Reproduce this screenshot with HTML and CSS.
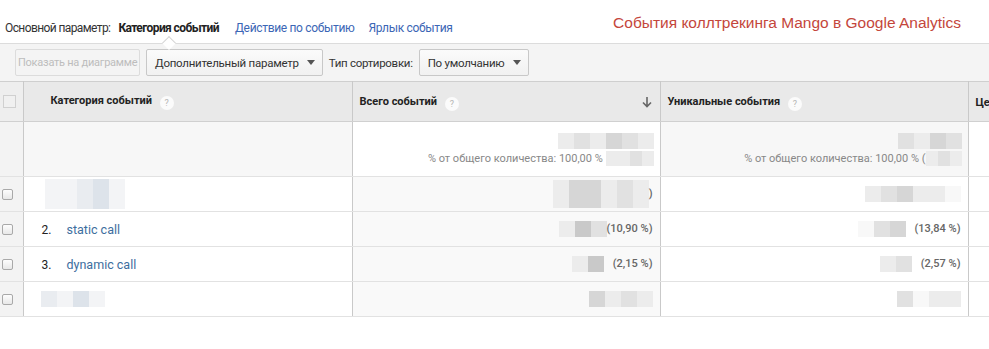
FILE: index.html
```html
<!DOCTYPE html>
<html lang="ru">
<head>
  <meta charset="UTF-8">
  <title>События коллтрекинга Mango в Google Analytics</title>
  <link rel="stylesheet" href="styles.css">
</head>
<body>

  <div class="topbar">
    <div class="dims">
      <span class="dims-label">Основной параметр:</span>
      <span class="dim active">Категория событий</span>
      <a class="dim" href="#">Действие по событию</a>
      <a class="dim" href="#">Ярлык события</a>
    </div>
    <div class="title">События коллтрекинга Mango в Google Analytics</div>
  </div>

  <div class="toolbar">
    <button class="btn disabled">Показать на диаграмме</button>
    <button class="btn select wide">Дополнительный параметр <span class="caret"></span></button>
    <span class="tb-label">Тип сортировки:</span>
    <button class="btn select">По умолчанию <span class="caret"></span></button>
  </div>

  <div class="table-wrap">
    <table class="report">
      <colgroup>
        <col class="c-check"><col class="c-dim"><col class="c-num"><col class="c-num"><col class="c-rest">
      </colgroup>
      <thead>
        <tr>
          <th class="check"><span class="box big"></span></th>
          <th class="dim-head">Категория событий <span class="help">?</span></th>
          <th class="sorted"><div class="th-flex"><span>Всего событий <span class="help">?</span></span>
            <svg width="10" height="11" viewBox="0 0 10 11"><path d="M5 0v9M1 5.5l4 4 4-4" fill="none" stroke="#666" stroke-width="1.6"/></svg></div></th>
          <th>Уникальные события <span class="help">?</span></th>
          <th>Це</th>
        </tr>
      </thead>
      <tbody>
        <tr class="totals">
          <td class="check"></td>
          <td class="t-gray"></td>
          <td class="t-white">
            <div class="big-num"><span class="blur"><i class="s1"></i><i class="s2"></i><i class="s1"></i><i class="s3"></i><i class="s2"></i><i class="s1"></i></span></div>
            <div class="share">% от общего количества: 100,00 % <span class="blur sm"><i class="s1"></i><i class="s1"></i><i class="s2"></i><i class="s1"></i></span></div>
          </td>
          <td class="t-gray">
            <div class="big-num"><span class="blur"><i class="s2"></i><i class="s1"></i><i class="s3"></i><i class="s2"></i></span></div>
            <div class="share">% от общего количества: 100,00 % (<span class="blur sm"><i class="s1"></i><i class="s2"></i><i class="s1"></i></span></div>
          </td>
          <td></td>
        </tr>
        <tr>
          <td class="check"><span class="box"></span></td>
          <td><span class="blur cat"><i class="b1"></i><i class="b1"></i><i class="b2"></i><i class="b3"></i><i class="b1"></i></span></td>
          <td class="sorted num"><span class="blur tall"><i class="s1"></i><i class="s3"></i><i class="s3"></i><i class="s1"></i><i class="s2"></i><i class="s1"></i></span><span class="pct">)</span></td>
          <td class="num"><span class="blur"><i class="s1"></i><i class="s2"></i><i class="s3"></i><i class="s1"></i><i class="s1"></i><i class="s0"></i></span></td>
          <td></td>
        </tr>
        <tr>
          <td class="check"><span class="box"></span></td>
          <td><span class="rank">2.</span><a class="link" href="#">static call</a></td>
          <td class="sorted num"><span class="blur"><i class="s1"></i><i class="s4"></i><i class="s2"></i></span><span class="pct">(10,90 %)</span></td>
          <td class="num"><span class="blur"><i class="s0"></i><i class="s2"></i><i class="s3"></i></span><span class="pct gap">(13,84 %)</span></td>
          <td></td>
        </tr>
        <tr>
          <td class="check"><span class="box"></span></td>
          <td><span class="rank">3.</span><a class="link" href="#">dynamic call</a></td>
          <td class="sorted num"><span class="blur"><i class="s1"></i><i class="s4"></i></span><span class="pct gap">(2,15 %)</span></td>
          <td class="num"><span class="blur"><i class="s1"></i><i class="s2"></i></span><span class="pct gap">(2,57 %)</span></td>
          <td></td>
        </tr>
        <tr>
          <td class="check"><span class="box"></span></td>
          <td><span class="blur cat short"><i class="b2"></i><i class="b1"></i><i class="b3"></i><i class="b1"></i></span></td>
          <td class="sorted num"><span class="blur"><i class="s3"></i><i class="s1"></i><i class="s2"></i><i class="s1"></i></span></td>
          <td class="num"><span class="blur"><i class="s2"></i><i class="s0"></i><i class="s1"></i><i class="s1"></i></span></td>
          <td></td>
        </tr>
      </tbody>
    </table>
  </div>

</body>
</html>
```

FILE: styles.css
```css
* {
  margin: 0;
  padding: 0;
  box-sizing: border-box;
}
body {
  font-family: Roboto, "Noto Sans", sans-serif;
  color: #222;
  background: #fff;
  width: 989px;
  overflow: hidden;
}

/* Верхняя строка */
.topbar {
  display: flex;
  justify-content: space-between;
  height: 43px;
  padding: 0 28px 0 5px;
}
.dims {
  display: flex;
  gap: 14px;
  padding-top: 20px;
  font-size: 12px;
  line-height: 16px;
  letter-spacing: -0.33px;
}
.dims-label {
  color: #333;
  margin-right: -6px;
  letter-spacing: -0.6px;
}
.dim {
  color: #3b66b5;
  text-decoration: none;
}
.dim.active {
  position: relative;
  color: #222;
  font-weight: 700;
  letter-spacing: -0.6px;
  margin-right: 2px;
}
.dim.active::after {
  content: "";
  position: absolute;
  left: 46px;
  top: 18px;
  width: 9px;
  height: 9px;
  background: #fff;
  border-left: 1px solid #d6d6d6;
  border-top: 1px solid #d6d6d6;
  transform: rotate(45deg);
}
.title {
  padding-top: 14px;
  font-family: "Liberation Sans", Arial, sans-serif;
  font-size: 15.5px;
  line-height: 18px;
  color: #c4463b;
}

/* Панель инструментов */
.toolbar {
  display: flex;
  align-items: center;
  gap: 6px;
  height: 38px;
  padding: 0 0 0 15px;
  background: #f4f4f4;
  border-top: 1px solid #dcdcdc;
}
.btn {
  height: 27px;
  border: 1px solid #c8c8c8;
  border-radius: 2px;
  background: linear-gradient(#fbfbfb, #f1f1f1);
  font-family: Roboto, sans-serif;
  font-size: 11.5px;
  letter-spacing: -0.25px;
  color: #333;
  display: inline-flex;
  align-items: center;
  white-space: nowrap;
}
.btn.disabled {
  width: 125px;
  overflow: hidden;
  padding-left: 2px;
  font-size: 11px;
  letter-spacing: -0.25px;
  color: #bdbdbd;
  border-color: #dcdcdc;
  background: #f4f4f4;
}
.btn.select {
  padding: 0 7px 0 8px;
  gap: 8px;
}
.caret {
  width: 0;
  height: 0;
  border-left: 4px solid transparent;
  border-right: 4px solid transparent;
  border-top: 5px solid #555;
}
.tb-label {
  font-size: 11.5px;
  letter-spacing: -0.3px;
  color: #333;
}

/* Таблица отчёта */
.table-wrap {
  width: 989px;
  overflow: hidden;
}
.report {
  width: 1068px;
  table-layout: fixed;
  border-collapse: collapse;
  font-size: 11px;
}
.c-check { width: 23px; }
.c-dim { width: 329px; }
.c-num { width: 308px; }
.c-rest { width: 100px; }

.report th,
.report td {
  border-bottom: 1px solid #e2e2e2;
  border-right: 1px solid #c9c9c9;
  vertical-align: middle;
}
.report th {
  height: 40px;
  background: #e9e9e9;
  border-top: 1px solid #cfcfcf;
  border-bottom-color: #d0d0d0;
  text-align: left;
  font-weight: 700;
  color: #222;
  padding: 2px 8px 0 7px;
  white-space: nowrap;
}
.report th.dim-head {
  padding-left: 27px;
  padding-top: 0;
}
.report th.check {
  padding: 0 0 0 3px;
  background: #eeeeee;
}
.th-flex {
  display: flex;
  justify-content: space-between;
  align-items: center;
}
.help {
  display: inline-block;
  width: 14px;
  height: 14px;
  margin-left: 5px;
  border-radius: 50%;
  background: #fbfbfb;
  color: #b5b5b5;
  font-size: 9px;
  line-height: 14px;
  text-align: center;
  font-weight: 400;
  vertical-align: -2px;
}

.report td {
  height: 35px;
  background: #fff;
  padding: 0 7px;
}
.report td.check {
  background: #f3f3f3;
  padding: 0 0 0 2px;
}
.report td.sorted { background: #f9f9f9; }
.totals td { height: 55px; }
.totals td.t-gray { background: #f7f7f7; }
.totals td.t-white { background: #fff; }
.totals td { text-align: right; padding: 0 6px 0 7px; }

.box {
  display: block;
  width: 11px;
  height: 11px;
  border: 1px solid #a9a9a9;
  border-radius: 2px;
  background: linear-gradient(#fdfdfd, #e8e8e8);
}
.box.big {
  width: 13px;
  height: 13px;
  border-color: #d0d0d0;
  background: #f0f0f0;
  border-radius: 0;
}

.rank {
  display: inline-block;
  width: 25px;
  padding-left: 11px;
  box-sizing: content-box;
  font-size: 12px;
  color: #222;
}
.link {
  font-size: 12.5px;
  color: #3d6e9e;
  text-decoration: none;
}
.num {
  text-align: right;
}
.pct {
  font-size: 11px;
  color: #666;
  font-weight: 500;
}
.pct.gap { margin-left: 9px; }

.big-num {
  margin-bottom: 2px;
}
.share {
  font-size: 11px;
  color: #888;
}

/* Размытые значения */
.blur {
  display: inline-flex;
  vertical-align: middle;
  height: 16px;
}
.blur i {
  width: 16px;
  height: 100%;
}
.blur.tall { height: 28px; }
.blur.sm { height: 15px; vertical-align: -4px; }
.blur.sm i { width: 12px; }
.blur.cat { margin-left: 14px; height: 30px; }
.blur.cat.short { margin-left: 10px; height: 16px; }
.s0 { background: #f8f8f8; }
.s1 { background: #ececec; }
.s2 { background: #e1e1e1; }
.s3 { background: #d6d6d6; }
.s4 { background: #c9c9c9; }
.b1 { background: #f3f4f6; }
.b2 { background: #e9ecf0; }
.b3 { background: #dde3ea; }
```
